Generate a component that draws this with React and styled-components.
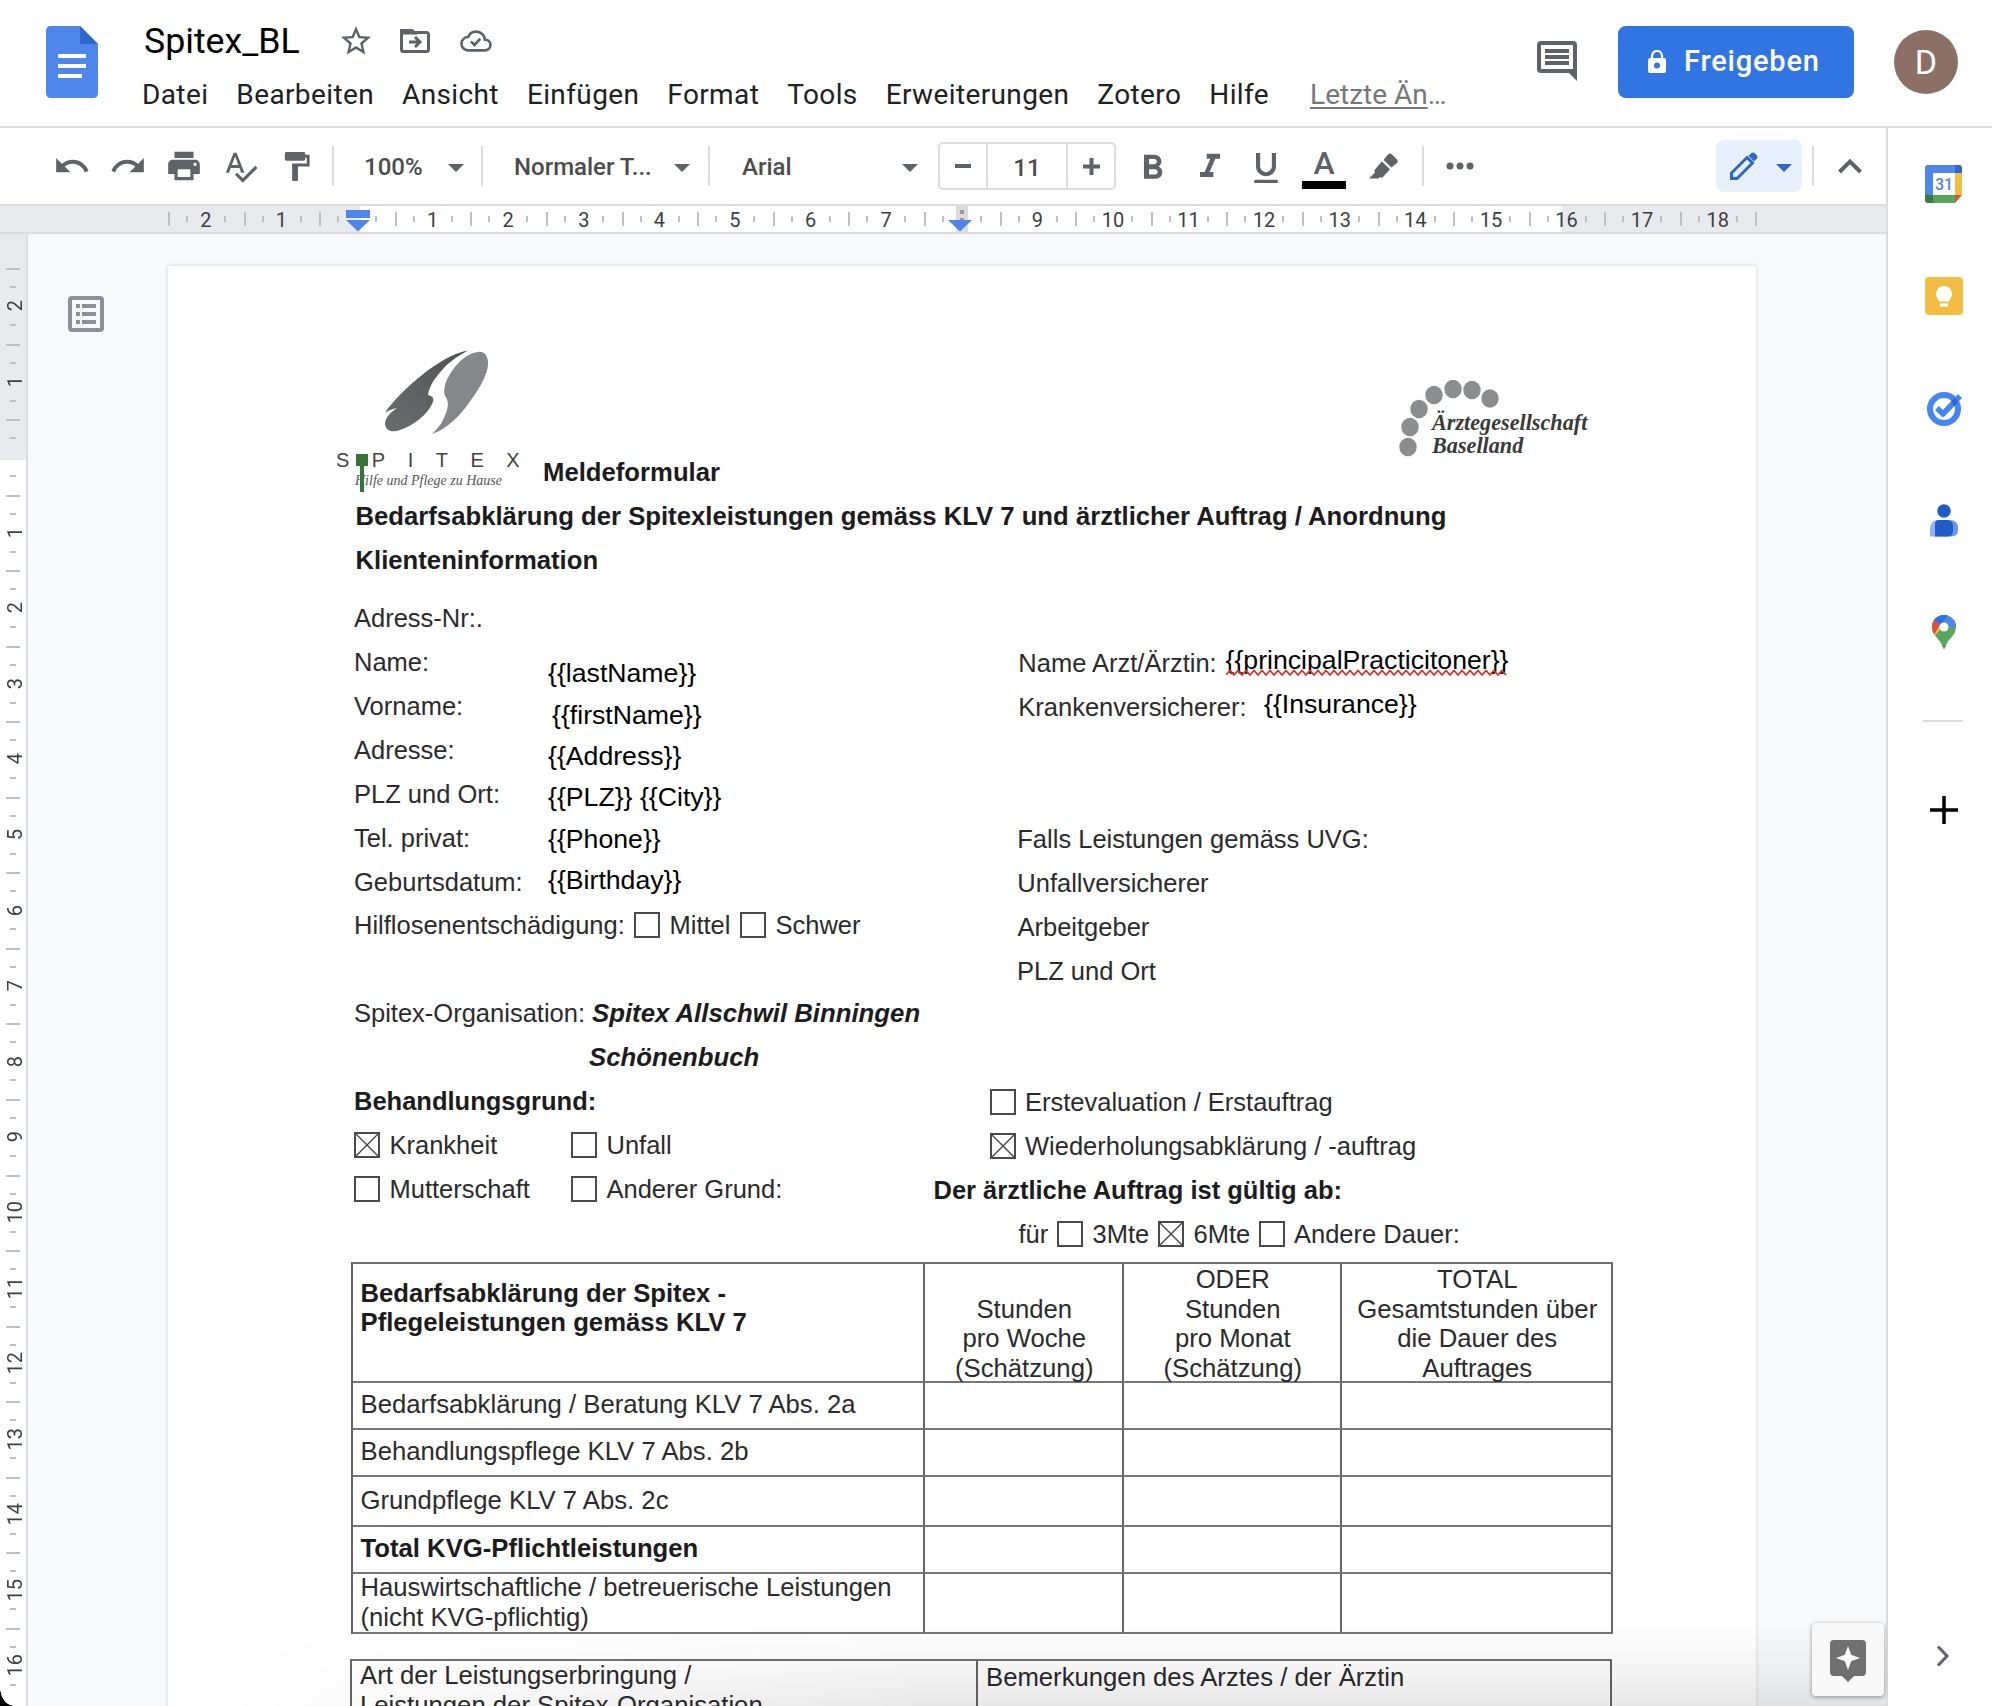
import React from "react";
import styled, { createGlobalStyle, css } from "styled-components";
import {
  MdStarBorder,
  MdUndo,
  MdRedo,
  MdPrint,
  MdSpellcheck,
  MdFormatPaint,
  MdFormatBold,
  MdFormatItalic,
  MdFormatUnderlined,
} from "react-icons/md";

const ui = `Roboto, "Liberation Sans", sans-serif`;
const arial = `"Liberation Sans", Arial, sans-serif`;
const serif = `"Liberation Serif", "Times New Roman", serif`;
const line = "#dadce0";
const icon = "#5f6368";
const tick = "#bdc1c6";
const blue = "#4f86ec";
const CM = 75.6;

const GlobalStyle = createGlobalStyle`
  * { box-sizing: border-box; }
  html, body { margin: 0; padding: 0; background: #fff; }
  body { font-family: ${ui}; overflow: hidden; }
  svg { display: block; flex: none; }
`;

const Window = styled.div`
  position: relative;
  width: 1992px;
  height: 1706px;
  overflow: hidden;
  display: flex;
  flex-direction: column;
  background: #fff;
`;

/* ---------- header ---------- */
const Header = styled.header`
  height: 128px;
  flex: none;
  display: flex;
  align-items: flex-start;
  padding: 0 34px 0 46px;
  border-bottom: 2px solid ${line};
`;
const DocLogo = styled.div`
  padding-top: 26px;
  width: 96px;
`;
const TitleBlock = styled.div`
  flex: 1;
  display: flex;
  flex-direction: column;
`;
const TitleRow = styled.div`
  display: flex;
  align-items: center;
  height: 46px;
  margin-top: 18px;
  padding-left: 2px;
  color: ${icon};
`;
const Title = styled.div`
  font-size: 35.7px;
  line-height: 46px;
  color: #000;
  width: 194px;
`;
const TitleIcon = styled.div`
  width: ${(p) => p.$w}px;
`;
const MenuBar = styled.nav`
  display: flex;
  gap: 28px;
  margin-top: 13px;
  font-size: 28px;
  letter-spacing: 0.38px;
  line-height: 36px;
  color: #202124;
  white-space: nowrap;
`;
const LastEdit = styled.span`
  margin-left: 13px;
  color: #777;
  letter-spacing: 0;
  u {
    text-decoration-thickness: 2px;
    text-underline-offset: 3px;
  }
`;
const CommentIcon = styled.div`
  padding-top: 41px;
  width: 81px;
`;
const ShareButton = styled.button`
  margin-top: 26px;
  width: 236px;
  height: 72px;
  border: 0;
  border-radius: 8px;
  background: #3175e2;
  color: #fff;
  display: flex;
  align-items: center;
  gap: 18px;
  padding: 0 0 2px 30px;
  font: 500 29px ${ui};
  letter-spacing: 0.8px;
`;
const Avatar = styled.div`
  margin: 30px 0 0 40px;
  width: 64px;
  height: 64px;
  border-radius: 50%;
  background: #8c7066;
  color: #fff;
  font-size: 34px;
  display: flex;
  align-items: center;
  justify-content: center;
`;

/* ---------- body ---------- */
const Body = styled.div`
  flex: 1;
  display: flex;
  min-height: 0;
`;
const Editor = styled.div`
  width: 1886px;
  display: flex;
  flex-direction: column;
  position: relative;
`;
const Toolbar = styled.div`
  height: 78px;
  flex: none;
  display: flex;
  align-items: center;
  padding: 0 24px 0 53px;
  border-bottom: 2px solid ${line};
  color: ${icon};
`;
const Slot = styled.div`
  width: ${(p) => p.$w}px;
  flex: none;
  display: flex;
  align-items: center;
  height: 76px;
  padding-top: ${(p) => p.$t || 0}px;
`;
const Separator = styled.div`
  width: 2px;
  height: 40px;
  background: ${line};
  margin-right: ${(p) => p.$r}px;
`;
const Label = styled.div`
  width: ${(p) => p.$w}px;
  font: 500 24px/30px ${ui};
  color: #4b4c4e;
  padding-top: 2px;
  white-space: nowrap;
`;
const Caret = styled.div`
  width: 0;
  height: 0;
  border: 8px solid transparent;
  border-top-color: ${(p) => p.$c || icon};
  border-bottom: 0;
  margin: 4px ${(p) => p.$r || 0}px 0 0;
`;
const SizeBox = styled.div`
  width: 178px;
  height: 48px;
  margin-right: 16px;
  border: 2px solid ${line};
  border-radius: 5px;
  display: grid;
  grid-template-columns: 46px 80px 1fr;
  > * {
    display: flex;
    align-items: center;
    justify-content: center;
  }
  > * + * {
    border-left: 2px solid ${line};
  }
`;
const SizeValue = styled.div`
  font: 500 24px ${ui};
  color: #4b4c4e;
  padding-top: 3px;
`;
const ColorA = styled.div`
  width: 44px;
  display: flex;
  flex-direction: column;
  align-items: center;
  font: 500 32px/36px ${ui};
  border-bottom: 8px solid #000;
  margin-top: 2px;
`;
const ModeButton = styled.div`
  width: 86px;
  height: 52px;
  margin: 0 10px 0 auto;
  border-radius: 8px;
  background: #e8f0fe;
  display: flex;
  align-items: center;
  gap: 18px;
  padding-left: 14px;
`;

/* ---------- rulers ---------- */
const Ruler = styled.div`
  height: 28px;
  flex: none;
  border-bottom: 2px solid ${line};
  display: flex;
  padding-left: 168px;
  background: linear-gradient(90deg, #e8eaed 360px, #fff 360px, #fff 1562px, #e8eaed 1562px);
`;
const RulerCell = styled.div`
  width: ${(p) => (p.$last ? 2 : CM)}px;
  height: 26px;
  flex: none;
  position: relative;
  text-align: center;
  font: 400 20px/28px ${ui};
  color: #3c4043;
  background: linear-gradient(${tick}, ${tick}) 0 6px / 2px 14px no-repeat
    ${(p) =>
      !p.$last &&
      css`, linear-gradient(${tick}, ${tick}) 18px 10px / 2px 6px no-repeat,
    linear-gradient(${tick}, ${tick}) 56px 10px / 2px 6px no-repeat`};
`;
const IndentMarks = styled.svg`
  position: absolute;
  left: ${(p) => p.$x}px;
  top: 0;
`;
const SideRuler = styled.div`
  width: 28px;
  flex: none;
  border-right: 2px solid ${line};
  padding-top: 34px;
  background: linear-gradient(#e8eaed 226px, #fff 226px);
`;
const SideCell = styled.div`
  height: ${75.55}px;
  width: 26px;
  display: flex;
  align-items: center;
  justify-content: center;
  padding-left: 4px;
  font: 400 20px/22px ${ui};
  color: #3c4043;
  background: linear-gradient(${tick}, ${tick}) 6px 0 / 14px 2px no-repeat,
    linear-gradient(${tick}, ${tick}) 10px 18px / 6px 2px no-repeat,
    linear-gradient(${tick}, ${tick}) 10px 56px / 6px 2px no-repeat;
  span {
    writing-mode: vertical-rl;
    transform: rotate(180deg);
  }
`;
const Workspace = styled.div`
  flex: 1;
  display: flex;
  min-height: 0;
  overflow: hidden;
  background: #f8f9fb;
`;
const OutlineRail = styled.div`
  width: 140px;
  flex: none;
  padding: 62px 0 0 40px;
`;

/* ---------- scanned page ---------- */
const Page = styled.article`
  position: relative;
  width: 1588px;
  height: 1500px;
  margin-top: 32px;
  flex: none;
  background: #fff;
  box-shadow: 0 0 4px rgba(60, 64, 67, 0.22);
  font: 25.5px/29.5px ${arial};
  color: #2b2b2d;
  white-space: nowrap;
`;
const FormHead = styled.div`
  display: flex;
  align-items: flex-start;
  height: 229.3px;
  padding: 84px 0 0 167px;
`;
const SpitexLogo = styled.div`
  width: 208px;
  svg {
    margin-left: 50px;
  }
`;
const SpitexName = styled.div`
  margin: 14px 0 0 1px;
  font-size: 20px;
  line-height: 22px;
  letter-spacing: 22.5px;
  color: #444;
`;
const Tagline = styled.div`
  padding: 1px 0 0 20px;
  font: italic 14px/18px ${serif};
  color: #555;
`;
const FormName = styled.div`
  margin-top: 107px;
  width: 857px;
  font-weight: 700;
  line-height: 30px;
  font-size: 25.7px;
  color: #1c1c1e;
`;
const SocietyLogo = styled.div`
  position: relative;
  margin-top: 30px;
  padding: 32px 0 0 32px;
  font: italic 700 22.2px/22.7px ${serif};
  color: #3a3a3a;
  svg {
    position: absolute;
    left: -1px;
    top: 0;
  }
`;
const Heading = styled.h2`
  margin: 0;
  padding-left: 187.5px;
  font-size: 25.7px;
  line-height: 43.4px;
  font-weight: 700;
  color: #1c1c1e;
`;
const Fields = styled.div`
  display: grid;
  grid-template-columns: 579.5px 1fr;
  margin-top: 14.8px;
  padding-left: 186px;
`;
const Column = styled.div`
  padding-top: ${(p) => p.$top || 0}px;
`;
const Line = styled.div`
  height: 43.94px;
  line-height: 43.94px;
  display: flex;
  align-items: center;
  padding-left: ${(p) => p.$in || 0}px;
  ${(p) => p.$b && "font-weight: 700; color: #1c1c1e;"}
  ${(p) => p.$i && "font-style: italic; font-size: 25.75px;"}
`;
const Cell = styled.span`
  width: ${(p) => p.$w}px;
  flex: none;
`;
const Option = styled.span`
  display: flex;
  align-items: center;
  gap: 9.5px;
  flex: none;
  width: ${(p) => (p.$w ? p.$w + "px" : "auto")};
`;
const Box = styled.i`
  width: 26px;
  height: 26px;
  margin-bottom: 3px;
  flex: none;
  border: 2px solid #4a4a4a;
  ${(p) =>
    p.$on &&
    css`
      background: linear-gradient(45deg, transparent 47.5%, #444 48%, #444 52%, transparent 52.5%),
        linear-gradient(-45deg, transparent 47.5%, #444 48%, #444 52%, transparent 52.5%);
    `}
`;
const Table = styled.div`
  display: grid;
  grid-template-columns: ${(p) => p.$cols};
  grid-template-rows: ${(p) => p.$rows};
  width: 1262px;
  margin: ${(p) => p.$top}px 0 0 ${(p) => p.$left}px;
  border-top: 2px solid #707070;
  border-left: 2px solid #666;
  font-size: 25.7px;
`;
const Td = styled.div`
  border-right: 2px solid #666;
  border-bottom: 2px solid #787878;
  padding: ${(p) => p.$pt || 0}px 0 0 ${(p) => (p.$center ? 2 : 8)}px;
  display: flex;
  flex-direction: column;
  align-items: ${(p) => (p.$center ? "center" : "flex-start")};
  justify-content: ${(p) => (p.$pt ? "flex-start" : "center")};
  ${(p) => p.$b && "font-weight: 700; color: #1c1c1e;"}
`;
const TextBoxes = styled.div`
  position: absolute;
  left: ${(p) => p.$x}px;
  top: ${(p) => p.$y}px;
  font-size: 26.67px;
  line-height: ${(p) => p.$lh}px;
  color: #000;
`;
const Placeholder = styled.div`
  position: relative;
  width: max-content;
  margin-left: ${(p) => p.$in || 0}px;
`;
const Squiggle = styled.svg`
  position: absolute;
  left: 0;
  top: 30px;
`;
const ImageAnchor = styled.div`
  position: absolute;
  left: 188px;
  top: 188px;
  width: 12px;
  height: 12px;
  background: #38733a;
  &::after {
    content: "";
    position: absolute;
    left: 4px;
    top: 12px;
    width: 4px;
    height: 26px;
    background: #38733a;
  }
`;
const BottomShade = styled.div`
  position: absolute;
  left: 28px;
  right: 0;
  bottom: 0;
  height: 84px;
  background: linear-gradient(rgba(0, 0, 0, 0), rgba(0, 0, 0, 0.035) 50%, rgba(0, 0, 0, 0.09));
  mask-image: linear-gradient(90deg, transparent 200px, #000 900px);
`;
const Explore = styled.div`
  position: absolute;
  right: 2px;
  bottom: 10px;
  width: 72px;
  height: 73px;
  padding: 17px;
  border-radius: 4px;
  background: #f8f8f8;
  box-shadow: 0 1px 4px rgba(0, 0, 0, 0.4);
`;
const WindowCorner = styled.div`
  position: absolute;
  left: 0;
  bottom: 0;
  width: 14px;
  height: 18px;
  background: radial-gradient(ellipse 14px 18px at 100% 0, transparent 97%, #000 100%);
`;

/* ---------- side panel ---------- */
const SidePanel = styled.aside`
  flex: 1;
  border-left: 2px solid ${line};
  display: flex;
  flex-direction: column;
`;
const AppSlot = styled.div`
  height: 112px;
  width: 100%;
  display: flex;
  align-items: center;
  padding: 0 0 1px 37px;
`;
const PanelRule = styled.div`
  width: 40px;
  height: 2px;
  margin: 32px 0 74px 35px;
  background: ${line};
`;
const PanelIcon = styled.div`
  margin-left: ${(p) => p.$x}px;
  margin-top: ${(p) => p.$t || 0}px;
`;

const CheckOption = ({ on, w, children }) => (
  <Option $w={w}>
    <Box $on={on} />
    {children}
  </Option>
);

const SpitexMark = () => (
  <svg width="104" height="85" viewBox="0 0 104 85">
    <defs>
      <linearGradient id="leafDark" x1="1" y1="0" x2="0" y2="1">
        <stop offset="0" stopColor="#505254" />
        <stop offset="1" stopColor="#6a6c6e" />
      </linearGradient>
    </defs>
    <path
      fill="url(#leafDark)"
      d="M83 0.500C68 3 52 13 37 25C21 38 9 50 0 62.500C4 60 8 59 12 58C4 63 0 69 0 74C1 81 7 83 15 80C29 75 42 65 47 54C50 49 48 46 43 45C44 36 50 28 58 19C66 10 75 5 83 0.500Z"
    />
    <path
      fill="#85878a"
      d="M93 2C83 3 74 11 67 21C60 31 58 39 60 46C65 52 63 60 58 70C55 76 51 80 47 84C62 79 76 65 86 50C97 35 104 21 103 11C102 5 99 1 93 2Z"
    />
  </svg>
);

const dots = [[9, 67], [11, 47], [20, 29], [35, 15], [54, 9], [73, 10], [91, 18.5]];

const Calendar = () => (
  <svg width="38" height="38" viewBox="0 0 38 38">
    <rect width="37" height="38" rx="3" fill="#fff" />
    <path d="M3 0H30V8H8V30H0V3Q0 0 3 0Z" fill={blue} />
    <path d="M30 0H34Q37 0 37 3V8H30Z" fill="#2f67cb" />
    <rect x="30" y="8" width="7" height="22" fill="#f2bd42" />
    <path d="M8 30H30V38H8Z" fill="#58a55c" />
    <path d="M0 30H8V38H3Q0 38 0 35Z" fill="#3c7a40" />
    <path d="M30 30H37L30 38Z" fill="#d95040" />
    <text x="19" y="25" textAnchor="middle" fontFamily="Roboto, sans-serif" fontWeight="500" fontSize="16" fill={blue}>31</text>
  </svg>
);
const Keep = () => (
  <svg width="38" height="38" viewBox="0 0 38 38">
    <rect width="38" height="38" rx="4" fill="#f2bd42" />
    <path d="M19 9A8 8 0 0 0 14 23.2V24.5H24V23.2A8 8 0 0 0 19 9Z" fill="#fff" />
    <rect x="15" y="26.5" width="8" height="3" fill="#fff" />
  </svg>
);
const Tasks = () => (
  <svg width="38" height="38" viewBox="0 0 38 38">
    <circle cx="19" cy="20" r="14" fill="none" stroke="#4285f4" strokeWidth="6" />
    <path d="M12 19L18 25L35 7" fill="none" stroke="#4285f4" strokeWidth="5.5" strokeLinejoin="round" />
    <path d="M26 12.5L29.5 9L33 13L29 17.5Z" fill="#2f67cb" />
  </svg>
);
const Contacts = () => (
  <svg width="38" height="38" viewBox="0 0 38 38">
    <circle cx="19" cy="10" r="6.7" fill="#1f5bc4" />
    <path d="M5 35.500V28Q5 19 14 19H20V35.500Z" fill="#93b1f7" />
    <path d="M19 19H24Q33 19 33 27V29Q33 35.500 26 35.500H19Z" fill="#6a96f5" />
    <path d="M10 35.500V23Q10 19 14 19H22Q28 19 28 25V30Q28 35.500 22 35.500Z" fill="#1f5bc4" />
  </svg>
);
const Maps = () => (
  <svg width="38" height="38" viewBox="0 0 38 38">
    <defs>
      <clipPath id="pin">
        <path d="M19 2A12 12 0 0 0 7 14C7 23 16 26 17.500 34Q19 38 20.500 34C22 26 31 23 31 14A12 12 0 0 0 19 2Z" />
      </clipPath>
    </defs>
    <g clipPath="url(#pin)">
      <rect width="38" height="38" fill="#58a55c" />
      <path d="M0 34L28 2H0Z" fill="#f2bd42" />
      <path d="M0 0H22L9 22L0 20Z" fill="#d95040" />
      <path d="M8 6L19 15L31 8V0H8Z" fill={blue} />
      <path d="M8 6L16 12L23 2H8Z" fill="#3072dc" />
      <path d="M19 14L31 5V14Z" fill={blue} />
    </g>
    <circle cx="19" cy="14" r="4.500" fill="#fff" />
  </svg>
);

const Menu = ["Datei", "Bearbeiten", "Ansicht", "Einfügen", "Format", "Tools", "Erweiterungen", "Zotero", "Hilfe"];
const hTicks = Array.from({ length: 21 }, (_, i) => i - 2);
const vTicks = Array.from({ length: 19 }, (_, i) => i - 2);
const squiggle = "M0 6" + Array.from({ length: 35 }, (_, i) => `L${i * 8 + 4} 1.500L${i * 8 + 8} 6`).join("");

const serviceRows = [
  ["Bedarfsabklärung / Beratung KLV 7 Abs. 2a"],
  ["Behandlungspflege KLV 7 Abs. 2b"],
  ["Grundpflege KLV 7 Abs. 2c"],
  ["Total KVG-Pflichtleistungen"],
  ["Hauswirtschaftliche / betreuerische Leistungen", "(nicht KVG-pflichtig)"],
];

function DocsHeader() {
  return (
    <Header>
      <DocLogo>
        <svg width="52" height="72" viewBox="0 0 52 72">
          <path d="M5 0H34L52 18V67Q52 72 47 72H5Q0 72 0 67V5Q0 0 5 0Z" fill={blue} />
          <path d="M34 0L52 18H34Z" fill="#2f67cb" />
          <path d="M12 28H40V32H12ZM12 38H40V42H12ZM12 48H36V52H12Z" fill="#fff" />
        </svg>
      </DocLogo>
      <TitleBlock>
        <TitleRow>
          <Title>Spitex_BL</Title>
          <TitleIcon $w={62}><MdStarBorder size={36} /></TitleIcon>
          <TitleIcon $w={60}>
            <svg width="30" height="26" viewBox="0 0 30 26" fill="none" stroke={icon} strokeWidth="3">
              <path d="M1.500 4.500V21.500Q1.500 23.500 3.500 23.500H26.500Q28.500 23.500 28.500 21.500V6.500Q28.500 4.500 26.500 4.500Z" />
              <path d="M1.500 5V2.500H12L14.500 5Z" fill={icon} />
              <path d="M9 14H19M15 9L20 14L15 19" />
            </svg>
          </TitleIcon>
          <TitleIcon $w={40}>
            <svg width="32" height="22" viewBox="0 4 24 16" fill="none" stroke={icon} strokeWidth="2">
              <path d="M18.700 11A6.800 6.200 0 0 0 12 5C9.500 5 7.200 6.400 6.200 9A5 5 0 0 0 6 19H19A4 4 0 0 0 18.700 11Z" />
              <path d="M8.200 12.300L10.800 15L15.200 10.300" />
            </svg>
          </TitleIcon>
        </TitleRow>
        <MenuBar>
          {Menu.map((m) => <span key={m}>{m}</span>)}
          <LastEdit><u>Letzte Än</u>…</LastEdit>
        </MenuBar>
      </TitleBlock>
      <CommentIcon>
        <svg width="40" height="40" viewBox="0 0 40 40">
          <path fillRule="evenodd" fill={icon} d="M4 0H36Q40 0 40 4V40L32 32H4Q0 32 0 28V4Q0 0 4 0ZM4 4V28H36V4ZM8 8H32V12H8ZM8 14H32V18H8ZM8 20H32V24H8Z" />
        </svg>
      </CommentIcon>
      <ShareButton>
        <svg width="18" height="23" viewBox="0 0 18 23">
          <path d="M4 9V6A5 5 0 0 1 14 6V9" fill="none" stroke="#fff" strokeWidth="2.200" />
          <path fillRule="evenodd" fill="#fff" d="M2 8H16Q18 8 18 10V21Q18 23 16 23H2Q0 23 0 21V10Q0 8 2 8ZM9 12.500A3 3 0 1 0 9 18.500A3 3 0 1 0 9 12.500Z" />
        </svg>
        Freigeben
      </ShareButton>
      <Avatar>D</Avatar>
    </Header>
  );
}

function Tools() {
  return (
    <Toolbar>
      <Slot $w={56}><MdUndo size={38} /></Slot>
      <Slot $w={56}><MdRedo size={38} /></Slot>
      <Slot $w={57}><MdPrint size={38} /></Slot>
      <Slot $w={57}><MdSpellcheck size={37} /></Slot>
      <Slot $w={53}><MdFormatPaint size={35} /></Slot>
      <Separator $r={30} />
      <Label $w={84}>100%</Label>
      <Caret $r={17} />
      <Separator $r={31} />
      <Label $w={160}>Normaler T...</Label>
      <Caret $r={18} />
      <Separator $r={32} />
      <Label $w={160}>Arial</Label>
      <Caret $r={20} />
      <SizeBox>
        <div>
          <svg width="16" height="4"><rect width="16" height="4" fill={icon} /></svg>
        </div>
        <SizeValue>11</SizeValue>
        <div>
          <svg width="17" height="17"><path d="M0 6.500H17V10.500H0ZM6.500 0H10.500V17H6.500Z" fill={icon} /></svg>
        </div>
      </SizeBox>
      <Slot $w={58} $t={4}><MdFormatBold size={41} /></Slot>
      <Slot $w={56} $t={2}><MdFormatItalic size={40} /></Slot>
      <Slot $w={56} $t={4}><MdFormatUnderlined size={40} /></Slot>
      <Slot $w={67}><ColorA>A</ColorA></Slot>
      <Slot $w={53}>
        <svg width="29" height="26" viewBox="0 0 29 26" fill={icon} style={undefined}>
          <path d="M19 1.500Q21 -0.500 23 1.500L28 6.500Q29.500 8.500 28 10L22.500 14.500L14.500 7Z" />
          <path d="M12.800 8.500L21 16.200L14 24Q12.500 25.500 11 24L9.500 25.500H0L6 19.500Q4.500 18 6 16.500Z" />
        </svg>
      </Slot>
      <Separator $r={22} />
      <svg width="28" height="8" fill={icon}>
        <circle cx="4" cy="4" r="3.500" /><circle cx="14" cy="4" r="3.500" /><circle cx="24" cy="4" r="3.500" />
      </svg>
      <ModeButton>
        <svg width="28" height="28" viewBox="0 0 28 28">
          <path d="M1.500 26.500V21L17 5.500L22.500 11L7 26.500Z" fill="none" stroke="#2f67cb" strokeWidth="3" />
          <path d="M18.500 4L21.500 1Q23 0 24.500 1L27 3.500Q28 5 27 6.500L24 9.500Z" fill="#2f67cb" />
        </svg>
        <Caret $c="#2f67cb" />
      </ModeButton>
      <Separator $r={24} />
      <svg width="24" height="16" viewBox="0 0 24 16" fill="none" stroke={icon} strokeWidth="4">
        <path d="M1.500 14L12 3.500L22.500 14" />
      </svg>
    </Toolbar>
  );
}

function HorizontalRuler() {
  return (
    <Ruler>
      {hTicks.map((n) => (
        <RulerCell key={n}>
          {n !== 0 && n !== 8 ? Math.abs(n) : null}
          {n === 0 && (
            <IndentMarks $x={26.800} width="24" height="26">
              <rect y="4" width="24" height="8" fill={blue} />
              <path d="M0 14H24L12 25.500Z" fill={blue} />
            </IndentMarks>
          )}
          {n === 8 && (
            <IndentMarks $x={24} width="24" height="26">
              <rect x="8" width="12" height="26" fill="#dcdcdc" />
              <path d="M12 4H16V8H12ZM12 12H16V14H12Z" fill="#9a9a9a" />
              <path d="M0 14H24L12 25.500Z" fill={blue} />
            </IndentMarks>
          )}
        </RulerCell>
      ))}
      <RulerCell $last />
    </Ruler>
  );
}

function ScannedForm() {
  return (
    <Page>
      <FormHead>
        <SpitexLogo>
          <SpitexMark />
          <SpitexName>SPITEX</SpitexName>
          <Tagline>Hilfe und Pflege zu Hause</Tagline>
        </SpitexLogo>
        <FormName>Meldeformular</FormName>
        <SocietyLogo>
          <svg width="102" height="78" fill="#8b8d8f">
            {dots.map(([x, y]) => <ellipse key={x} cx={x} cy={y} rx="8.700" ry="9.300" />)}
          </svg>
          Ärztegesellschaft
          <br />
          Baselland
        </SocietyLogo>
      </FormHead>
      <Heading>Bedarfsabklärung der Spitexleistungen gemäss KLV 7 und ärztlicher Auftrag / Anordnung</Heading>
      <Heading>Klienteninformation</Heading>
      <Fields>
        <Column>
          <Line>Adress-Nr:.</Line>
          <Line>Name:</Line>
          <Line>Vorname:</Line>
          <Line>Adresse:</Line>
          <Line>PLZ und Ort:</Line>
          <Line>Tel. privat:</Line>
          <Line>Geburtsdatum:</Line>
          <Line>
            <Cell $w={280}>Hilflosenentschädigung:</Cell>
            <CheckOption w={106}>Mittel</CheckOption>
            <CheckOption>Schwer</CheckOption>
          </Line>
          <Line />
          <Line>
            <Cell $w={238}>Spitex-Organisation:</Cell>
            <Line as="span" $b $i>Spitex Allschwil Binningen</Line>
          </Line>
          <Line $in={235} $b $i>Schönenbuch</Line>
          <Line $b>Behandlungsgrund:</Line>
          <Line>
            <CheckOption on w={217}>Krankheit</CheckOption>
            <CheckOption>Unfall</CheckOption>
          </Line>
          <Line>
            <CheckOption w={217}>Mutterschaft</CheckOption>
            <CheckOption>Anderer Grund:</CheckOption>
          </Line>
        </Column>
        <Column $top={45.200}>
          <Line $in={84.800}>Name Arzt/Ärztin:</Line>
          <Line $in={84.800}>Krankenversicherer:</Line>
          <Line />
          <Line />
          <Line $in={83.800}>Falls Leistungen gemäss UVG:</Line>
          <Line $in={83.800}>Unfallversicherer</Line>
          <Line $in={84}>Arbeitgeber</Line>
          <Line $in={83.500}>PLZ und Ort</Line>
          <Line />
          <Line />
          <Line $in={56}><CheckOption>Erstevaluation / Erstauftrag</CheckOption></Line>
          <Line $in={56}><CheckOption on>Wiederholungsabklärung / -auftrag</CheckOption></Line>
          <Line $b>Der ärztliche Auftrag ist gültig ab:</Line>
          <Line $in={85}>
            <Cell $w={38.500}>für</Cell>
            <CheckOption w={101}>3Mte</CheckOption>
            <CheckOption on w={100.500}>6Mte</CheckOption>
            <CheckOption>Andere Dauer:</CheckOption>
          </Line>
        </Column>
      </Fields>
      <Table
        $cols="572.500px 198.500px 218.500px 1fr"
        $rows="119px 47px 47px 50px 47px 60.500px"
        $top={4.300}
        $left={182.500}
      >
        <Td $b $pt={15}>
          <span>Bedarfsabklärung der Spitex -</span>
          <span>Pflegeleistungen gemäss KLV 7</span>
        </Td>
        <Td $center $pt={31}>
          <span>Stunden</span><span>pro Woche</span><span>(Schätzung)</span>
        </Td>
        <Td $center $pt={1.500}>
          <span>ODER</span><span>Stunden</span><span>pro Monat</span><span>(Schätzung)</span>
        </Td>
        <Td $center $pt={1.500}>
          <span>TOTAL</span><span>Gesamtstunden über</span><span>die Dauer des</span><span>Auftrages</span>
        </Td>
        {serviceRows.map((row, i) => (
          <React.Fragment key={row[0]}>
            <Td $b={i === 3}>{row.map((t) => <span key={t}>{t}</span>)}</Td>
            <Td /><Td /><Td />
          </React.Fragment>
        ))}
      </Table>
      <Table $cols="626px 1fr" $rows="120px" $top={24.500} $left={182}>
        <Td $pt={0.500}>
          <span>Art der Leistungserbringung /</span>
          <span>Leistungen der Spitex-Organisation</span>
        </Td>
        <Td $pt={2}><span>Bemerkungen des Arztes / der Ärztin</span></Td>
      </Table>

      <TextBoxes $x={380} $y={387.300} $lh={41.350}>
        <Placeholder>{"{{lastName}}"}</Placeholder>
        <Placeholder $in={4}>{"{{firstName}}"}</Placeholder>
        <Placeholder>{"{{Address}}"}</Placeholder>
        <Placeholder>{"{{PLZ}} {{City}}"}</Placeholder>
        <Placeholder>{"{{Phone}}"}</Placeholder>
        <Placeholder>{"{{Birthday}}"}</Placeholder>
      </TextBoxes>
      <TextBoxes $x={1057.500} $y={373} $lh={43.700}>
        <Placeholder>
          {"{{principalPracticitoner}}"}
          <Squiggle width="282" height="8"><path d={squiggle} fill="none" stroke="#d93025" strokeWidth="1.800" /></Squiggle>
        </Placeholder>
        <Placeholder $in={38.500}>{"{{Insurance}}"}</Placeholder>
      </TextBoxes>
      <ImageAnchor />
    </Page>
  );
}

export default function App() {
  return (
    <Window>
      <GlobalStyle />
      <DocsHeader />
      <Body>
        <Editor>
          <Tools />
          <HorizontalRuler />
          <Workspace>
            <SideRuler>
              {vTicks.map((n) => (
                <SideCell key={n}><span>{n === 0 ? "" : Math.abs(n)}</span></SideCell>
              ))}
            </SideRuler>
            <OutlineRail>
              <svg width="36" height="36" viewBox="0 0 36 36" fill="#8e9097">
                <rect x="2" y="2" width="32" height="32" rx="2" fill="none" stroke="#8e9097" strokeWidth="4" />
                <path d="M8 8H12V12H8ZM14 8H28V12H14ZM8 16H12V20H8ZM14 16H28V20H14ZM8 24H12V28H8ZM14 24H28V28H14Z" />
              </svg>
            </OutlineRail>
            <ScannedForm />
          </Workspace>
          <BottomShade />
          <Explore>
            <svg width="38" height="44" viewBox="0 0 38 44">
              <path fillRule="evenodd" fill="#707070" d="M5 0H33Q37 0 37 4V32Q37 36 33 36H25L19 42L13 36H5Q1 36 1 32V4Q1 0 5 0ZM19 6L15.800 14.800L7 18L15.800 21.200L19 30L22.200 21.200L31 18L22.200 14.800Z" />
            </svg>
          </Explore>
        </Editor>
        <SidePanel>
          <AppSlot><Calendar /></AppSlot>
          <AppSlot><Keep /></AppSlot>
          <AppSlot><Tasks /></AppSlot>
          <AppSlot><Contacts /></AppSlot>
          <AppSlot><Maps /></AppSlot>
          <PanelRule />
          <PanelIcon $x={42}>
            <svg width="28" height="28"><path d="M14 0V28M0 14H28" stroke="#000" strokeWidth="3.500" /></svg>
          </PanelIcon>
          <PanelIcon $x={48} $t={821}>
            <svg width="14" height="22" fill="none" stroke={icon} strokeWidth="3"><path d="M2 1.500L11 11L2 20.500" /></svg>
          </PanelIcon>
        </SidePanel>
      </Body>
      <WindowCorner />
    </Window>
  );
}
